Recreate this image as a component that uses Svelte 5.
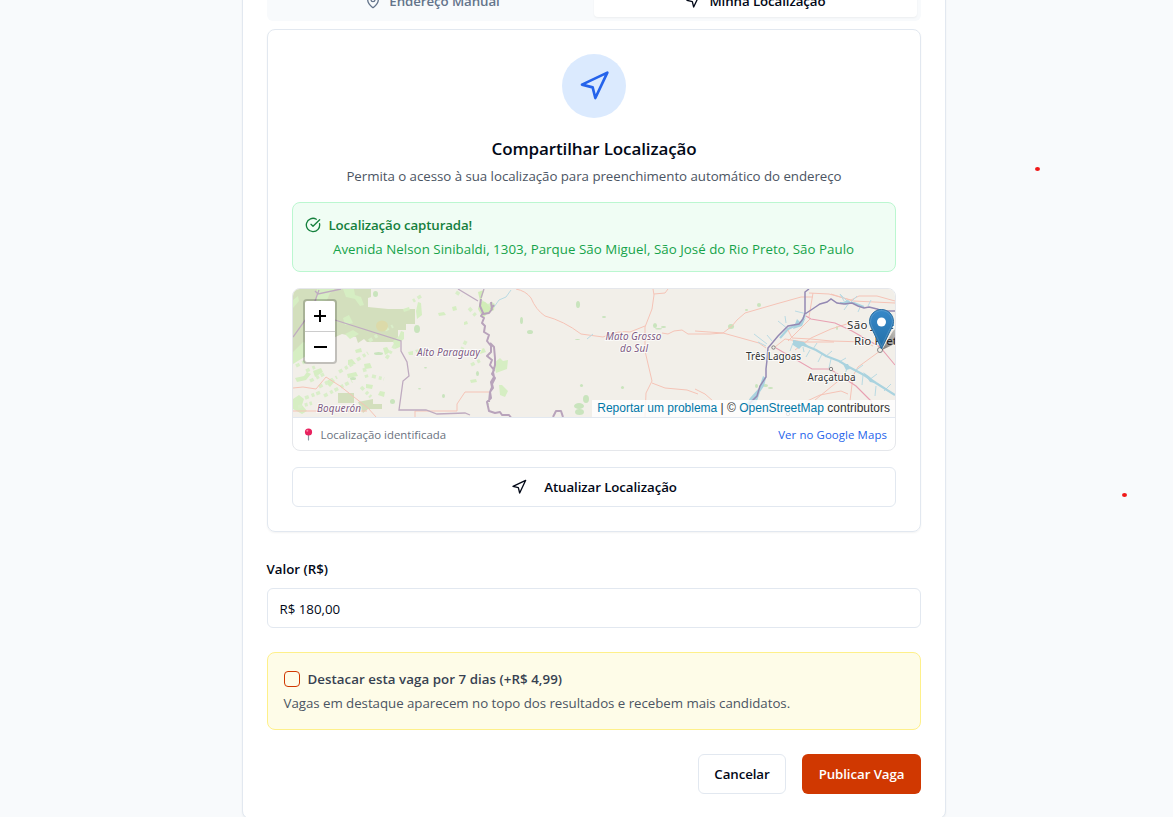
<script>
  let highlighted = $state(false);

  const vegetation = [
    'M293 289h78v8l-3 1v9l20 2h27v15h-9v6h-8v12h-31l-3-3-6 4-2-6-14-3-24 11-14 6-11 11z',
    'M338 393h16v10h-16z',
    'M358 402l15-3v5h9v5h-14l-5 4z'
  ];
  const lightVegetation = [
    'M293 352l10-10 7 2 5-5 9-2 2 5-9 6-7 1-4 7-13 8z',
    'M317 289l18 0-5 4-3 7-10 2zM293 300l5-4 1 5-6 7z',
    'M343 289h11l1 6 6 2 3 8-4 1-5-7-9-2zM343 318l6-3 4 8-8 2zM345 334l8-4 6 4-9 5z',
    'M482 300l6 4 4-2 3 2-1 6-5 2-5 5-4-8z',
    'M293 399l6-4 5 4-2 6 5 6-5 3-9-5z',
    'M295 378l9-2 3-4 4 2-5 6-9 2zM313 371l8-3 2 4-8 5zM325 382l7-4 3 3-5 6z',
    'M306 351l5-3 6 5-6 2zM348 360l4-1 4 5-8 1zM347 374l9-2 2 4-10 2zM364 364l6-1 2 5-7 1zM383 348l4-1 3 5-5 3z',
    'M393 341l6-5 2-5 3 1 0 7-4 3 0 5-5 2z',
    'M418 302l3 1 1 12-5 4-1-8zM403 309l6-2 1 3-6 2z',
    'M438 313l6-1 2 3-7 1zM464 322l3-1 1 3-4 1zM452 307l4-1 1 4-4 1z',
    'M494 363l6-5 3 3 5-1-1 9-11 4zM499 385l3 0 6 6-3 6-5-2z',
    'M479 350l5-2 2 4-6 2zM470 380l6-1 1 3-6 1zM415 350l6-1 2 3-6 1zM355 350l6-2 1 4-6 1z',
    'M380 391l5 1-1 5-6-2zM366 384l7 1-1 4-6-1zM408 352l5-1 0 4-4 0z'
  ];
  const motorways = [
    'M293 388l10-1 13 2 10-12 14 9 28 22 8 9M293 411l74 0',
    'M415 417v-6h42v-7l8-12h24',
    'M516 289q10 2 15 9 5 12 14 18 19 5 36 18l22 3q16-7 27-5l15-6M653 289l1 6-2 14-7 18 0 24 7 30-6 12-1 24',
    'M654 294l11-1 3-4M652 383l13 5 22 2 11 4M662 333l6 1 6-3 8-1 6 4h22l13-1 9-7 5-6 8-7 31-9 25-7 12 0',
    'M695 331l28 2 36 10 7 5M775 347l10-8 19 3 30 0M795 350l16-12 20-9 22-7M813 293l-4 24M831 294l22 7 42 2M880 351l-22 16-5 9-3 25M809 293l20 1 22 6 8-4h18l18 5',
    'M815 400l27-22M695 389l10 5 8 7M805 402l15-7 21-4 7 3M810 319l-22 22'
  ];
  const trunks = [
    'M806 316l5 3 24 4 17 8 28 16 15 18',
    'M776 348l36 21 18 0 26 17 16 16'
  ];
  const softTrunks = ['M788 330l4 8 19 1 20 2 34 1 8 4'];
  const thinRivers = [
    'M804 318l-7 8M807 314l-12-3M788 329l-10-8M786 323l-1-7M767 344l-13-10M772 341l-5-6M766 346l-8-4',
    'M793 343l-3 8M803 347l1 5M810 350l-4 7M813 349l4-6M822 354l-4 8M825 357l7-6M831 359l-2 9M839 362l7-4M848 366l-3 8M855 371l8-6M863 375l-1 10M869 380l8-6M876 386l-1 10M884 391l7-7',
    'M844 301l-4-7 9 9-5 7M851 302l6-6M861 305l-3 7M868 306l3-6M877 309l8 3M883 317l8-4',
    'M494 307l5-7 7-3 5-7M593 334l-6 5'
  ];
  const rivers = ['M793 341l11 4 12 5 10 6 13 5 10 6 15 8 12 8 19 12', 'M805 315l-4 8-13 6-8 9M840 303l14 0 10 4'];
  const borders = [
    'M293 337l18-25 8-22M341 289l-23 5-3-3',
    'M335 320l66 21 0 10 6 11 2 14-6 5-4 29 27 0 11 4 28-1 5 2M458 289l20 12M484 289l-3 9'
  ];
  const towns = [[773.500, 347.500], [831, 369], [788, 414]];
  const patches = [[520, 317, 3, 7], [527, 330, 6, 4], [576, 301, 4, 7], [580, 384, 3, 3], [574, 403, 10, 6], [583, 395, 6, 8], [575, 409, 9, 6], [653, 323, 4, 5], [661, 326, 5, 2], [655, 328, 7, 1.500], [728, 324, 6, 5], [757, 303, 4, 4], [763, 384, 5, 3], [768, 387, 5, 2], [755, 384, 3, 4], [602, 316, 4, 2], [621, 386, 3, 3], [575, 339, 5, 1], [836, 326, 2, 4], [745, 309, 3, 2], [424, 367, 3, 1.500], [418, 388, 3, 1.500], [390, 399, 5, 5], [414, 325, 6, 8], [373, 291, 5, 6], [374, 352, 9, 3], [350, 377, 6, 3], [442, 394, 3, 4], [476, 371, 3, 5], [487, 403, 2, 2]];
</script>

{#snippet navigation(size)}
  <svg class="nav-icon" width={size} height={size} viewBox="0 0 24 24" fill="none" stroke="currentColor" stroke-width="2" stroke-linecap="round" stroke-linejoin="round" aria-hidden="true"><polygon points="3 11 22 2 13 21 11 13 3 11" /></svg>
{/snippet}

<main>
  <section class="form-card">
    <div class="tabs">
      <button class="tab">
        <svg width="16" height="16" viewBox="0 0 24 24" fill="none" stroke="currentColor" stroke-width="2" stroke-linecap="round" stroke-linejoin="round" aria-hidden="true"><path d="M20 10c0 5-5.500 10.200-7.400 11.800a1 1 0 0 1-1.200 0C9.500 20.200 4 15 4 10a8 8 0 0 1 16 0" /><circle cx="12" cy="10" r="3" /></svg>
        <span>Endereço Manual</span>
      </button>
      <button class="tab active">{@render navigation(16)}<span>Minha Localização</span></button>
    </div>

    <div class="panel">
      <div class="circle">{@render navigation(32)}</div>
      <h3>Compartilhar Localização</h3>
      <p class="subtitle">Permita o acesso à sua localização para preenchimento automático do endereço</p>

      <div class="success">
        <div class="success-title">
          <svg width="16" height="16" viewBox="0 0 24 24" fill="none" stroke="currentColor" stroke-width="2" stroke-linecap="round" stroke-linejoin="round" aria-hidden="true"><path d="M21.800 10A10 10 0 1 1 17 3.335" /><path d="m9 11 3 3L22 4" /></svg>
          <span>Localização capturada!</span>
        </div>
        <p>Avenida Nelson Sinibaldi, 1303, Parque São Miguel, São José do Rio Preto, São Paulo</p>
      </div>

      <div class="map-card">
        <div class="map">
          <svg class="tiles" width="602" height="128" viewBox="293 289 602 128" aria-hidden="true">
            <rect x="293" y="289" width="602" height="128" fill="#f2efe9" />
            <g fill="#d3dfbd">{#each vegetation as d}<path {d} />{/each}</g>
            <g fill="#d6eec3">{#each lightVegetation as d}<path {d} />{/each}</g>
            <path d="M306 371l9-4M310 381l14-7M319 387l18-10M324 396l28-15M305 398l16-6M298 407l14-4M339 372l15-9M357 360l11-7M369 341l9-6M385 330l8-4M372 376l12 3M421 296l-8 5M456 292l6 4M469 308l7 8M466 341l-4 8M471 365l10-5M296 366l10-5M364 368l3 10M395 345l-9 14M361 387l10 10" fill="none" stroke="#d9eec9" stroke-width="3.500" stroke-dasharray="4 3 3 2" />
            <path d="M480 301l-2-9 6-2-2 8zM480 302l5 0 5 5 3-3 1 6-7 3-4 5-5-9z" fill="#d1edb7" />
            <ellipse cx="382" cy="326" rx="6" ry="5.500" fill="#dcdaa9" />
            <g fill="#c9e4bd">{#each patches as [x, y, width, height]}<ellipse cx={x + width / 2} cy={y + height / 2} rx={width / 2} ry={height / 2} />{/each}</g>
            <g class="motorways">{#each motorways as d}<path {d} />{/each}</g>
            <g class="thin-rivers">{#each thinRivers as d}<path {d} />{/each}</g>
            <g class="rivers">{#each rivers as d}<path {d} />{/each}</g>
            <path d="M763 376l3 2-2 8-4 6-4 12-10 1 4-7 9-10zM793 340l11 2 5 5-7-1-3 3-6-4zM793 329l4-10 4 4 5-6-4 9zM843 302l5-2 4 3-7 2zM843 364l5 0 2 5-4 1zM863 372l7 5 5 6-5-1z" fill="#aad3df" />
            <g class="trunks">{#each trunks as d}<path {d} />{/each}</g>
            <g class="motorways">{#each softTrunks as d}<path {d} />{/each}</g>
            <path d="M809 289l-4 3 0 7 0 14-2 6-4 5-11 2-10 10-10 12-1 12-1 9 0 8-6 9-3 10-6 6-7 9M805 314l9-6 6-4 7-2 4-3 6 4 7 1 8-1 6 3 6 2 5-1 8 2 6 2h13" fill="none" stroke="#9489b3" stroke-width="1.500" />
            <g class="borders">{#each borders as d}<path {d} />{/each}</g>
            <path d="M481 299l-1 7 3 7-2 3 3 2-2 5 3 3-1 6 5 3-2 6 4 5 0 6-4 4 5 4-2 5 4 5-2 4 3 4-3 6 1 4-3 4 1 6-4 4 2 9 6 2 5-1 2 3h7l3 4 4 1M483 314l6-1 3-4-1-7M491 309l3-4M490 343l4 4 1 11 0 7-2 7 1 5-3 5 1 5-2 5-1 10M553 417l3-6h5l2 6" fill="none" stroke="#b8a3bb" stroke-width="2" stroke-linejoin="round" />
            <g fill="#f2efe9" stroke="#777" stroke-width=".9">{#each towns as [cx, cy]}<circle {cx} {cy} r="1.700" />{/each}<circle cx="880" cy="350" r="2.500" /></g>
            <g class="regions">
              <text x="417" y="356" textLength="63">Alto Paraguay</text>
              <text x="317" y="411.500" textLength="44">Boquerón</text>
              <text x="605.500" y="340" textLength="56">Mato Grosso</text>
              <text x="620" y="352" textLength="28">do Sul</text>
            </g>
            <g class="cities">
              <text x="746" y="360" textLength="55">Três Lagoas</text>
              <text x="807.500" y="381" textLength="48">Araçatuba</text>
              <text class="large" x="847" y="329" textLength="47">São José</text>
              <text class="large" x="854" y="345" textLength="50">Rio Preto</text>
            </g>
          </svg>
          <svg class="marker" width="40" height="41" viewBox="0 0 40 41" aria-hidden="true">
            <defs>
              <linearGradient id="pin" x2="0" y2="1"><stop stop-color="#3688c9" /><stop offset="1" stop-color="#2370a7" /></linearGradient>
              <linearGradient id="shade" x1="0" y1="1" x2="1" y2="0"><stop stop-color="#000" stop-opacity=".5" /><stop offset="1" stop-color="#000" stop-opacity=".05" /></linearGradient>
            </defs>
            <path d="M13 41L24 22q6-7 16-4v10z" fill="url(#shade)" />
            <path d="M12.500.5C5.700.5.5 6 .5 12.600c0 3.200 1.800 6.400 3.500 9.600L12.500 40 21 22.200c1.700-3.200 3.500-6.400 3.500-9.600C24.500 6 19.300.5 12.500.5z" fill="url(#pin)" stroke="#2d6f9f" />
            <path d="M12.500 1.600C6.300 1.600 1.600 6.600 1.600 12.600c0 3 1.700 6 3.400 9.100l7.500 15.700L20 21.700c1.700-3.100 3.400-6.100 3.400-9.100 0-6-4.700-11-10.900-11z" fill="none" stroke="#fff" stroke-opacity=".15" />
            <circle cx="12.500" cy="13" r="4.500" fill="#fff" />
          </svg>
          <div class="zoom-control">
            <button aria-label="Aumentar"><svg width="14" height="14" viewBox="0 0 14 14"><path d="M7 1v12M1 7h12" /></svg></button>
            <button aria-label="Diminuir"><svg width="14" height="14" viewBox="0 0 14 14"><path d="M1 6h13" /></svg></button>
          </div>
          <div class="attribution"><span class="link">Reportar um problema</span> | © <span class="link">OpenStreetMap</span> contributors</div>
        </div>
        <div class="map-footer">
          <div class="identified">
            <svg width="9" height="13" viewBox="0 0 9 13" aria-hidden="true"><path d="M4.500 7v5" stroke="#8b99a5" stroke-width="1.200" stroke-linecap="round" /><circle cx="4.500" cy="4" r="3.600" fill="#e8225f" /><circle cx="3.300" cy="2.700" r="1" fill="#ff7fa2" /></svg>
            <span>Localização identificada</span>
          </div>
          <span class="google">Ver no Google Maps</span>
        </div>
      </div>

      <button class="outline update">{@render navigation(16)}<span>Atualizar Localização</span></button>
    </div>

    <label class="value-label" for="value">Valor (R$)</label>
    <input id="value" class="value" value="R$ 180,00" />

    <div class="highlight">
      <div class="highlight-row">
        <button class="checkbox" role="checkbox" aria-checked={highlighted} aria-label="Destacar" onclick={() => (highlighted = !highlighted)}></button>
        <span>Destacar esta vaga por 7 dias (+R$ 4,99)</span>
      </div>
      <p>Vagas em destaque aparecem no topo dos resultados e recebem mais candidatos.</p>
    </div>

    <div class="actions">
      <button class="outline cancel"><span>Cancelar</span></button>
      <button class="publish"><span>Publicar Vaga</span></button>
    </div>
  </section>
  <i class="dot first"></i>
  <i class="dot second"></i>
</main>

<style>
  :global(body) { margin: 0; overflow: hidden; background: #f8fafc; }
  * { box-sizing: border-box; }
  main { position: relative; height: 817px; overflow: hidden; font: 13.300px/20px "Open Sans", "Noto Sans", sans-serif; color: #020817; }
  button, input { font: inherit; color: inherit; margin: 0; }
  button { padding: 0; border: 0; background: none; white-space: nowrap; letter-spacing: -.09px; }
  p, h3 { margin: 0; white-space: nowrap; }
  svg { display: block; flex: none; }
  .form-card { width: 704px; height: 859px; margin: -40px 0 0 242px; padding: 20px 24px 24px; border: 1px solid #e2e8f0; border-radius: 8px; background: #fff; box-shadow: 0 1px 2px #0000000d; display: flex; flex-direction: column; }
  .tabs { height: 40px; flex: none; display: grid; grid-template-columns: 1fr 1fr; padding: 4px; border-radius: 6px; background: #f8fafc; }
  .tab { display: flex; align-items: center; justify-content: center; gap: 8px; font-weight: 600; color: #64748b; border-radius: 4px; }
  .tab.active { background: #fff; color: #020817; box-shadow: 0 1px 2px #0000000d; }
  .panel { margin-top: 8px; height: 503px; flex: none; padding: 24px; border: 1px solid #e2e8f0; border-radius: 8px; box-shadow: 0 1px 2px #0000000d; display: flex; flex-direction: column; }
  .circle { width: 64px; height: 64px; align-self: center; border-radius: 50%; background: #dbeafe; color: #2563eb; display: grid; place-items: center; }
  h3 { margin-top: 17px; text-align: center; font-size: 17px; line-height: 28px; font-weight: 600; letter-spacing: -.12px; }
  .subtitle { margin-top: 3px; text-align: center; color: #4b5563; letter-spacing: -.04px; }
  .success { margin-top: 16px; height: 70px; padding: 12px; border: 1px solid #bbf7d0; border-radius: 8px; background: #f0fdf4; color: #16a34a; }
  .success-title { display: flex; align-items: center; gap: 7.500px; color: #15803d; font-weight: 600; letter-spacing: -.13px; }
  .success p { margin: 4px 0 0 28px; letter-spacing: .035px; }
  .map-card { margin-top: 16px; height: 163px; border: 1px solid #e5e7eb; border-radius: 8px; overflow: hidden; }
  .map { position: relative; height: 128px; overflow: hidden; }
  .motorways path { fill: none; stroke: #f5c3b6; stroke-width: 1; }
  .trunks path { fill: none; stroke: #e8a0b2; stroke-width: 1.100; }
  .thin-rivers path { fill: none; stroke: #b9dae3; stroke-width: 1; }
  .rivers path { fill: none; stroke: #aad3df; stroke-width: 2.200; }
  .borders path { fill: none; stroke: #bfabc0; stroke-width: 1.300; }
  .regions text { font: italic 10px "Noto Sans", sans-serif; fill: #805c84; stroke: #fff; stroke-opacity: .75; stroke-width: 2px; paint-order: stroke; }
  .cities text { font: 10px "Noto Sans", sans-serif; fill: #303030; stroke: #fff; stroke-opacity: .75; stroke-width: 2px; paint-order: stroke; }
  .cities .large { font-size: 11.500px; }
  .marker { position: absolute; left: 576px; top: 20px; }
  .zoom-control { position: absolute; left: 10px; top: 10px; width: 34px; height: 65px; border: 2px solid #0003; border-radius: 4px; background-clip: padding-box; background-color: #fff; }
  .zoom-control button { width: 30px; height: 31px; display: grid; place-items: center; }
  .zoom-control button:first-child { border-bottom: 1px solid #ccc; }
  .zoom-control path { fill: none; stroke: #000; stroke-width: 2; }
  .attribution { position: absolute; right: 0; bottom: 0; height: 17px; padding: 0 5px; background: #ffffffcc; font: 12px/16.800px "Liberation Sans", sans-serif; color: #333; white-space: nowrap; }
  .link { color: #0078a8; }
  .map-footer { height: 33px; border-top: 1px solid #e2e8f0; padding: 1px 8px 0 11px; display: flex; align-items: center; justify-content: space-between; font-size: 11.400px; color: #6b7280; white-space: nowrap; }
  .identified { display: flex; align-items: center; gap: 7.500px; }
  .google { color: #2563eb; letter-spacing: .1px; }
  .outline { height: 40px; border: 1px solid #e2e8f0; border-radius: 6px; background: #fff; font-weight: 600; }
  .update { margin-top: 16px; display: flex; align-items: center; justify-content: center; gap: 17px; }
  .value-label { margin: 27px 0 0 -.5px; font-weight: 600; }
  .value { margin-top: 9px; height: 40px; flex: none; padding: 1px 11.500px 0; border: 1px solid #e2e8f0; border-radius: 6px; background: #fff; outline: none; }
  .highlight { margin-top: 24px; height: 78px; flex: none; padding: 16px; border: 1px solid #fef08a; border-radius: 8px; background: #fefce8; color: #4b5563; }
  .highlight-row { display: flex; align-items: center; gap: 7.500px; font-weight: 600; color: #374151; letter-spacing: .05px; }
  .checkbox { width: 16px; height: 16px; border: 1px solid #d03801; border-radius: 4px; }
  .highlight p { margin: 4px 0 0 -.5px; letter-spacing: -.04px; }
  .actions { margin-top: 24px; display: flex; justify-content: flex-end; gap: 16px; }
  .cancel { width: 88px; }
  .publish { width: 119px; height: 40px; border-radius: 6px; background: #d03801; color: #fff; font-weight: 600; }
  .dot { position: absolute; width: 4px; height: 4px; border-radius: 50%; background: #f01818; }
  .first { left: 1035px; top: 167px; width: 5px; }
  .second { left: 1122px; top: 493px; width: 5px; }
</style>
